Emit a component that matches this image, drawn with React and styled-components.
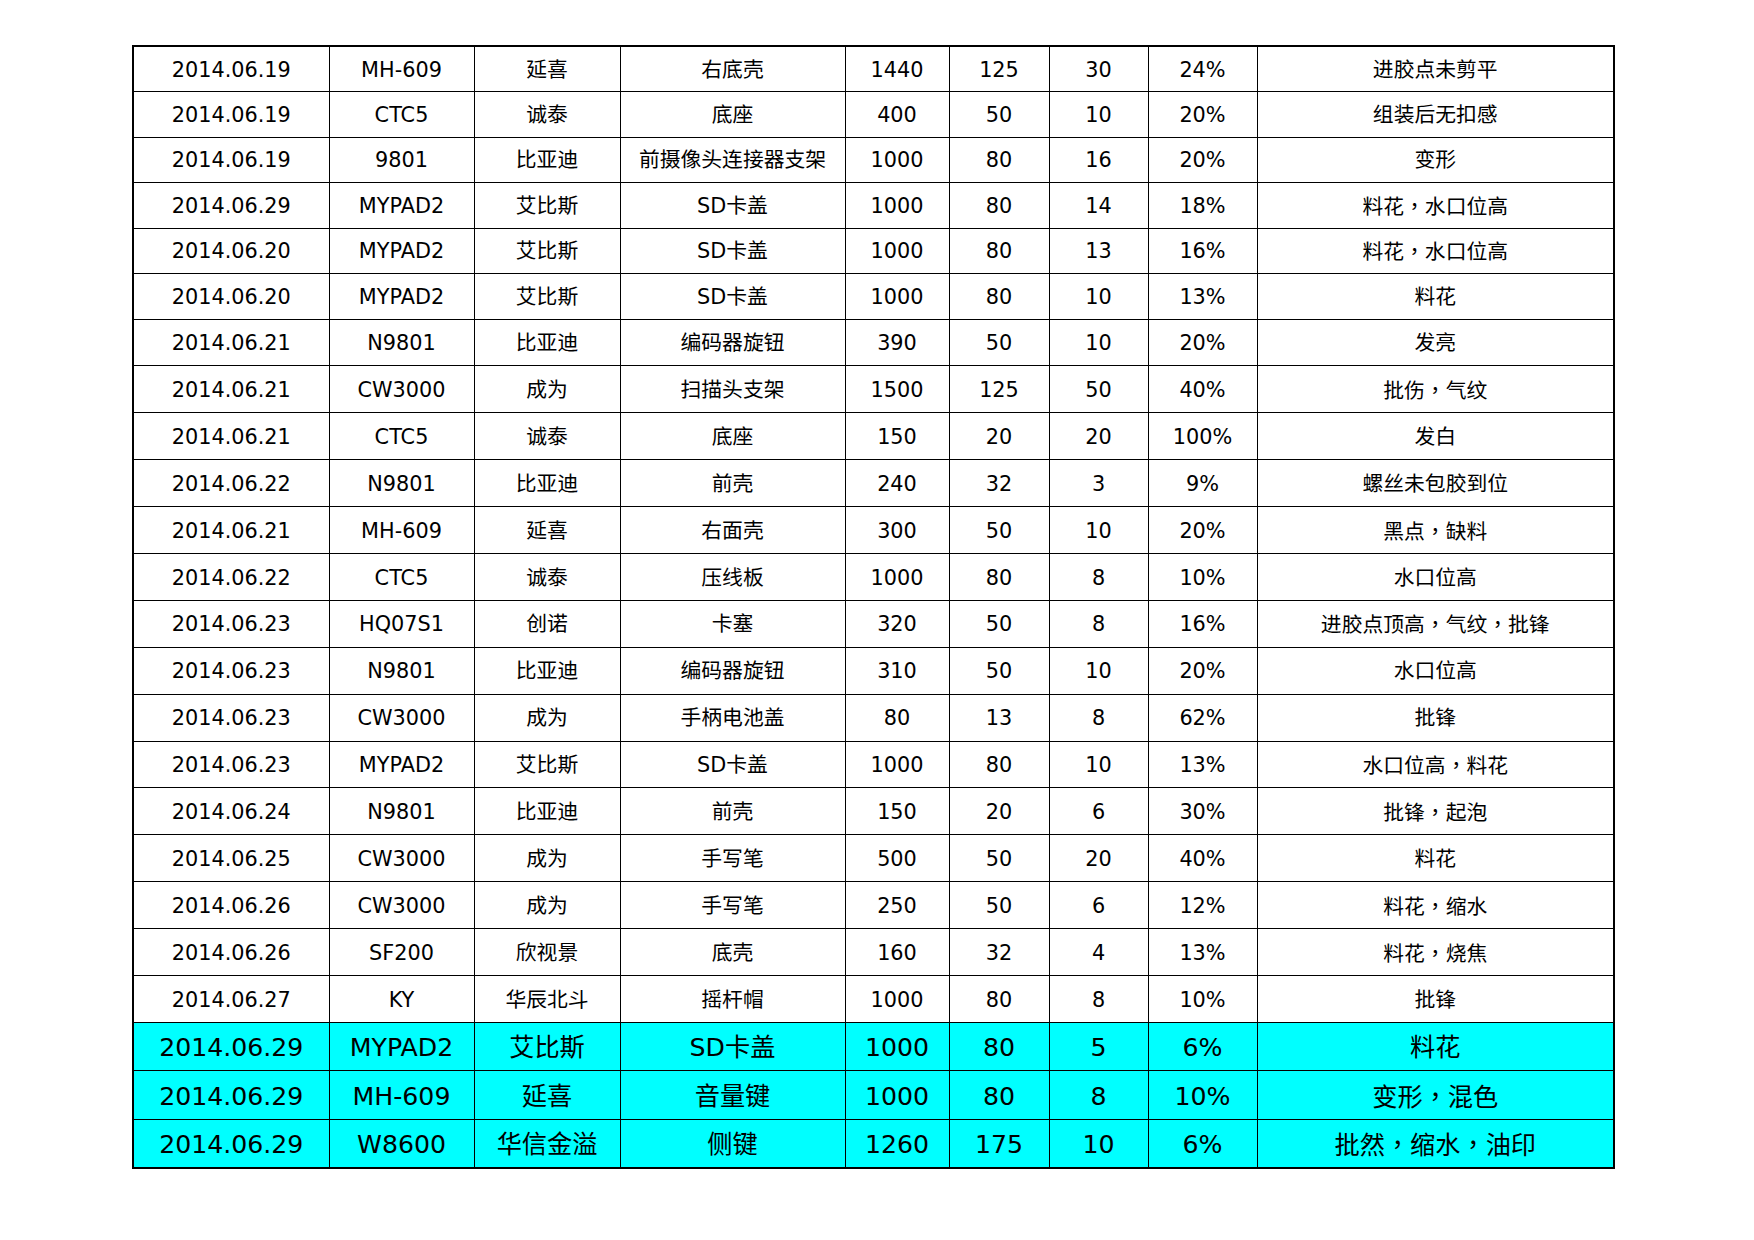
import { createGlobalStyle, styled } from "styled-components";

const GlobalStyle = createGlobalStyle`
  html, body {
    margin: 0;
    padding: 0;
    background: #ffffff;
  }
  body {
    font-family: "DejaVu Sans", "Noto Sans CJK SC", sans-serif;
    color: #000000;
  }
`;

const Page = styled.div`
  width: 1754px;
  height: 1240px;
  padding: 45px 0 0 132px;
  box-sizing: border-box;
`;

const Sheet = styled.table`
  border-collapse: collapse;
  table-layout: fixed;
  width: 1481px;
  border: 2px solid #000;
`;

const Row = styled.tr`
  height: ${(p) => p.$h}px;
  background: ${(p) => (p.$hl ? "#00ffff" : "#ffffff")};
  font-size: ${(p) => (p.$hl ? "25.2px" : "20.8px")};
`;

const Cell = styled.td`
  border: 1px solid #000;
  padding: 2px 0 0;
  text-align: center;
  vertical-align: middle;
  white-space: nowrap;
  line-height: 1;
`;

// full-width comma sits centred in the reference font
const Comma = styled.span`
  font-family: "Noto Sans CJK TC", "Noto Sans CJK SC", sans-serif;
`;

const widths = [196, 145, 146, 225, 104, 100, 99, 109, 357];

const rows = [
  ["2014.06.19", "MH-609", "延喜", "右底壳", "1440", "125", "30", "24%", "进胶点未剪平"],
  ["2014.06.19", "CTC5", "诚泰", "底座", "400", "50", "10", "20%", "组装后无扣感"],
  ["2014.06.19", "9801", "比亚迪", "前摄像头连接器支架", "1000", "80", "16", "20%", "变形"],
  ["2014.06.29", "MYPAD2", "艾比斯", "SD卡盖", "1000", "80", "14", "18%", "料花，水口位高"],
  ["2014.06.20", "MYPAD2", "艾比斯", "SD卡盖", "1000", "80", "13", "16%", "料花，水口位高"],
  ["2014.06.20", "MYPAD2", "艾比斯", "SD卡盖", "1000", "80", "10", "13%", "料花"],
  ["2014.06.21", "N9801", "比亚迪", "编码器旋钮", "390", "50", "10", "20%", "发亮"],
  ["2014.06.21", "CW3000", "成为", "扫描头支架", "1500", "125", "50", "40%", "批伤，气纹"],
  ["2014.06.21", "CTC5", "诚泰", "底座", "150", "20", "20", "100%", "发白"],
  ["2014.06.22", "N9801", "比亚迪", "前壳", "240", "32", "3", "9%", "螺丝未包胶到位"],
  ["2014.06.21", "MH-609", "延喜", "右面壳", "300", "50", "10", "20%", "黑点，缺料"],
  ["2014.06.22", "CTC5", "诚泰", "压线板", "1000", "80", "8", "10%", "水口位高"],
  ["2014.06.23", "HQ07S1", "创诺", "卡塞", "320", "50", "8", "16%", "进胶点顶高，气纹，批锋"],
  ["2014.06.23", "N9801", "比亚迪", "编码器旋钮", "310", "50", "10", "20%", "水口位高"],
  ["2014.06.23", "CW3000", "成为", "手柄电池盖", "80", "13", "8", "62%", "批锋"],
  ["2014.06.23", "MYPAD2", "艾比斯", "SD卡盖", "1000", "80", "10", "13%", "水口位高，料花"],
  ["2014.06.24", "N9801", "比亚迪", "前壳", "150", "20", "6", "30%", "批锋，起泡"],
  ["2014.06.25", "CW3000", "成为", "手写笔", "500", "50", "20", "40%", "料花"],
  ["2014.06.26", "CW3000", "成为", "手写笔", "250", "50", "6", "12%", "料花，缩水"],
  ["2014.06.26", "SF200", "欣视景", "底壳", "160", "32", "4", "13%", "料花，烧焦"],
  ["2014.06.27", "KY", "华辰北斗", "摇杆帽", "1000", "80", "8", "10%", "批锋"],
];

const latest = [
  ["2014.06.29", "MYPAD2", "艾比斯", "SD卡盖", "1000", "80", "5", "6%", "料花"],
  ["2014.06.29", "MH-609", "延喜", "音量键", "1000", "80", "8", "10%", "变形，混色"],
  ["2014.06.29", "W8600", "华信金溢", "侧键", "1260", "175", "10", "6%", "批然，缩水，油印"],
];

function CellText({ text }) {
  const parts = text.split("，");
  return parts.map((p, i) => (
    <span key={i}>
      {i > 0 && <Comma>，</Comma>}
      {p}
    </span>
  ));
}

export default function App() {
  return (
    <Page>
      <GlobalStyle />
      <Sheet>
        <colgroup>
          {widths.map((w, i) => (
            <col key={i} style={{ width: w }} />
          ))}
        </colgroup>
        <tbody>
          {rows.map((r, i) => (
            <Row key={i} $h={i < 6 ? 45.5 : 46.9}>
              {r.map((c, j) => (
                <Cell key={j}>
                  <CellText text={c} />
                </Cell>
              ))}
            </Row>
          ))}
          {latest.map((r, i) => (
            <Row key={"h" + i} $h={48.5} $hl>
              {r.map((c, j) => (
                <Cell key={j}>
                  <CellText text={c} />
                </Cell>
              ))}
            </Row>
          ))}
        </tbody>
      </Sheet>
    </Page>
  );
}
